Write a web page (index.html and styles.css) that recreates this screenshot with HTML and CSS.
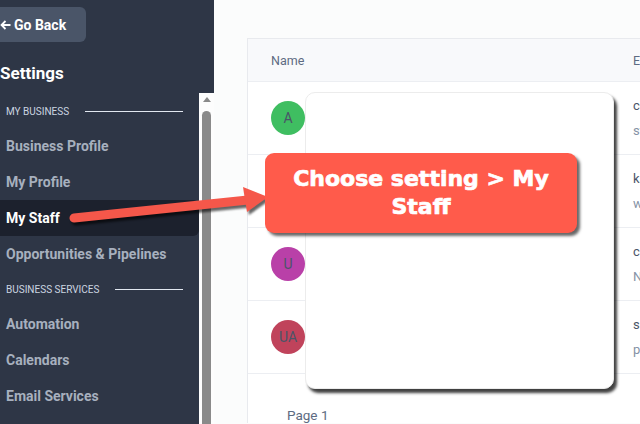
FILE: index.html
```html
<!DOCTYPE html>
<html lang="en">
<head>
    <meta charset="UTF-8">
    <meta name="viewport" content="width=device-width, initial-scale=1.0">
    <title>Settings - My Staff</title>
    <link rel="stylesheet" href="styles.css">
</head>
<body>
    <div class="page">
        <aside class="sidebar">
            <div class="sidebar-top">
                <button class="back-btn">
                    <svg width="11" height="10" viewBox="0 0 11 10"><path d="M10.5 5H1.5M5.5 1L1.5 5l4 4" fill="none" stroke="#fff" stroke-width="1.8"/></svg>
                    Go Back
                </button>
                <h2 class="title">Settings</h2>
            </div>
            <div class="nav-wrap">
                <nav class="nav">
                    <div class="section">MY BUSINESS <span class="rule"></span></div>
                    <a class="item">Business Profile</a>
                    <a class="item">My Profile</a>
                    <a class="item active">My Staff</a>
                    <a class="item">Opportunities &amp; Pipelines</a>
                    <div class="section">BUSINESS SERVICES <span class="rule"></span></div>
                    <a class="item">Automation</a>
                    <a class="item">Calendars</a>
                    <a class="item">Email Services</a>
                </nav>
                <div class="scroll-track">
                    <div class="scroll-up"></div>
                    <div class="scroll-thumb"></div>
                </div>
            </div>
        </aside>

        <main class="main">
            <div class="card">
                <div class="row head">
                    <div class="col-name">Name</div>
                    <div class="col-email">Email</div>
                </div>
                <div class="row">
                    <div class="col-name"><span class="avatar green">A</span></div>
                    <div class="col-email"><p>chris@agency.com</p><p class="sub">staff member</p></div>
                </div>
                <div class="row">
                    <div class="col-name"><span class="avatar green">K</span></div>
                    <div class="col-email"><p>kate@agency.com</p><p class="sub">web team</p></div>
                </div>
                <div class="row">
                    <div class="col-name"><span class="avatar purple">U</span></div>
                    <div class="col-email"><p>carl@agency.com</p><p class="sub">No phone</p></div>
                </div>
                <div class="row">
                    <div class="col-name"><span class="avatar red">UA</span></div>
                    <div class="col-email"><p>sam@agency.com</p><p class="sub">phone</p></div>
                </div>
                <div class="pager">Page 1</div>
            </div>
        </main>
    </div>

    <!-- annotation layer -->
    <div class="redact"></div>
    <svg class="arrow" width="640" height="424" viewBox="0 0 640 424">
        <line x1="74" y1="218" x2="248" y2="200" stroke="#f5574a" stroke-width="9" stroke-linecap="round"/>
        <polygon points="268,197 243,187 247,212" fill="#f5574a"/>
    </svg>
    <div class="callout">Choose setting &gt; My Staff</div>
</body>
</html>
```

FILE: styles.css
```css
* {
    box-sizing: border-box;
}
body {
    margin: 0;
    width: 640px;
    height: 424px;
    overflow: hidden;
    font-family: Roboto, "Noto Sans", sans-serif;
    background: #fbfcfc;
}
.page {
    display: flex;
    height: 424px;
}

/* sidebar */
.sidebar {
    width: 214px;
    flex-shrink: 0;
    background: #2e3646;
    display: flex;
    flex-direction: column;
}
.sidebar-top {
    padding-top: 7px;
}
.back-btn {
    display: flex;
    align-items: center;
    gap: 3px;
    margin-left: -12px;
    height: 35px;
    width: 98px;
    padding: 0 0 0 12px;
    border: none;
    border-radius: 6px;
    background: #4a5568;
    color: #fff;
    font-family: Roboto, sans-serif;
    font-weight: 700;
    font-size: 14px;
}
.title {
    margin: 18px 0 0;
    color: #fff;
    font-size: 17px;
    font-weight: 700;
    line-height: 26px;
}
.nav-wrap {
    flex: 1;
    display: flex;
    margin-top: 7px;
    min-height: 0;
}
.nav {
    flex: 1;
    padding-top: 1px;
}
.section {
    display: flex;
    align-items: center;
    gap: 16px;
    height: 34px;
    padding-left: 6px;
    padding-right: 16px;
    font-size: 10px;
    color: #cbd5e0;
}
.rule {
    flex: 1;
    height: 1px;
    background: #e2e8f0;
}
.item {
    display: block;
    height: 36px;
    line-height: 36px;
    padding-left: 6px;
    font-size: 14px;
    font-weight: 700;
    color: #a7b0be;
}
.item.active {
    color: #fff;
    background: #1c212d;
    border-radius: 0 6px 6px 0;
}
.scroll-track {
    width: 15px;
    background: #fdfdfd;
    padding: 4px 3px 0;
}
.scroll-up {
    width: 0;
    height: 0;
    margin: 0 auto;
    border-left: 4px solid transparent;
    border-right: 4px solid transparent;
    border-bottom: 5px solid #8a8a8a;
}
.scroll-thumb {
    height: 320px;
    margin-top: 9px;
    background: #8a8a8a;
    border-radius: 5px 5px 0 0;
}

/* main */
.main {
    flex: 1;
    padding: 38px 0 0 33px;
    overflow: hidden;
}
.card {
    width: 620px;
    background: #fff;
    border: 1px solid #e8eaee;
    border-bottom: none;
}
.row {
    display: flex;
    align-items: center;
    height: 73px;
    padding-left: 23px;
    border-bottom: 1px solid #eceef2;
}
.row.head {
    height: 43px;
    background: #f8f9fb;
    font-size: 12.5px;
    color: #5d6b82;
}
.col-name {
    width: 362px;
}
.col-email {
    flex: 1;
    white-space: nowrap;
}
.col-email p {
    margin: 0;
    font-size: 13px;
    color: #4a5568;
    line-height: 25px;
}
.col-email p.sub {
    color: #8592a6;
}
.avatar {
    display: inline-flex;
    align-items: center;
    justify-content: center;
    width: 34px;
    height: 34px;
    border-radius: 50%;
    font-size: 14px;
    color: #4a5568;
}
.avatar.green { background: #3fbe61; }
.avatar.purple { background: #b940a8; }
.avatar.red { background: #c0435b; }
.pager {
    padding: 33px 0 0 39px;
    font-size: 13.5px;
    color: #5d6b82;
}

/* annotations */
.redact {
    position: absolute;
    left: 305px;
    top: 92px;
    width: 309px;
    height: 297px;
    background: #fff;
    border: 1px solid #ececec;
    border-radius: 10px;
    box-shadow: 3px 4px 3px rgba(0, 0, 0, 0.75);
}
.arrow {
    position: absolute;
    left: 0;
    top: 0;
    filter: drop-shadow(2px 3px 1px rgba(0, 0, 0, 0.6));
}
.callout {
    position: absolute;
    left: 265px;
    top: 153px;
    width: 312px;
    height: 80px;
    padding: 12px 16px 0;
    background: #ff5b4b;
    border-radius: 9px;
    box-shadow: 3px 3px 3px rgba(0, 0, 0, 0.6);
    color: #fff;
    text-align: center;
    font-family: "DejaVu Sans", sans-serif;
    font-weight: 700;
    font-size: 22px;
    line-height: 28px;
    -webkit-text-stroke: 0.7px #fff;
}
```
